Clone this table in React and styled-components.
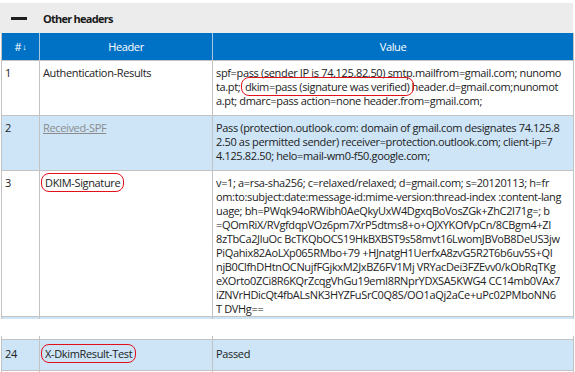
import React from "react";
import styled, { createGlobalStyle } from "styled-components";

const GlobalStyle = createGlobalStyle`
  html, body {
    margin: 0;
    padding: 0;
    background: #ffffff;
  }
  body {
    font-family: "Open Sans", "Noto Sans", "Liberation Sans", sans-serif;
    font-size: 11px;
    letter-spacing: -0.35px;
    color: #222222;
  }
`;

const Page = styled.div`
  width: 575px;
  height: 372px;
  overflow: hidden;
  padding-top: 3px;
  box-sizing: border-box;
`;

const SectionBar = styled.div`
  height: 30px;
  width: 573px;
  background: #ececec;
  display: flex;
  align-items: center;
  gap: 16px;
  padding-left: 11px;
  box-sizing: border-box;
`;

const Dash = styled.span`
  display: block;
  width: 16px;
  height: 3px;
  background: #1e1e1e;
`;

const SectionTitle = styled.span`
  font-weight: 700;
  font-size: 11px;
  letter-spacing: -0.75px;
  color: #1a1a1a;
`;

const Table = styled.div`
  width: 571px;
  margin-left: 1px;
  border-left: 1px solid #c3c3c3;
  border-right: 1px solid #c3c3c3;
`;

const Row = styled.div`
  display: grid;
  grid-template-columns: 38px 173px 1fr;
  height: ${(p) => p.$h}px;
  background: ${(p) => (p.$alt ? "#cde5f7" : "#ffffff")};
  border-bottom: ${(p) => (p.$last ? "none" : "1px solid #c3c3c3")};
  overflow: hidden;
`;

const HeadRow = styled(Row)`
  background: #0072c6;
  border-bottom: 1px solid #c3c3c3;
`;

const HeadCell = styled.div`
  color: #ffffff;
  display: flex;
  align-items: center;
  justify-content: center;
  border-right: 1px solid #a9c6de;
  &:last-child {
    border-right: none;
  }
`;

const Arrow = styled.span`
  font-size: 9px;
  margin-left: 1px;
`;

const Cell = styled.div`
  padding: ${(p) => p.$pt ?? 5}px 0 0 3px;
  border-right: 1px solid #c3c3c3;
  line-height: 14px;
  color: #222222;
  overflow: hidden;
  &:last-child {
    border-right: none;
  }
`;

const Line = styled.div`
  white-space: nowrap;
`;

const Marked = styled.span`
  outline: 1.5px solid #e2101a;
  outline-offset: 1px;
  border-radius: 6px;
  padding: 0 2px;
`;

const VisitedLink = styled.span`
  color: #8c8c8c;
  text-decoration: underline;
`;

const Gap = styled.div`
  height: 17px;
`;

const rows = [
  {
    n: "1",
    name: "Authentication-Results",
    h: 54,
    lines: [
      "spf=pass (sender IP is 74.125.82.50) smtp.mailfrom=gmail.com; nunomo",
      <>
        ta.pt; <Marked>dkim=pass (signature was verified)</Marked>header.d=gmail.com;nunomot
      </>,
      "a.pt; dmarc=pass action=none header.from=gmail.com;",
    ],
  },
  {
    n: "2",
    name: <VisitedLink>Received-SPF</VisitedLink>,
    alt: true,
    h: 54,
    lines: [
      "Pass (protection.outlook.com: domain of gmail.com designates 74.125.8",
      "2.50 as permitted sender) receiver=protection.outlook.com; client-ip=7",
      "4.125.82.50; helo=mail-wm0-f50.google.com;",
    ],
  },
  {
    n: "3",
    name: <Marked>DKIM-Signature</Marked>,
    h: 145,
    lines: [
      "v=1; a=rsa-sha256; c=relaxed/relaxed; d=gmail.com; s=20120113; h=fr",
      "om:to:subject:date:message-id:mime-version:thread-index :content-lang",
      "uage; bh=PWqk94oRWibh0AeQkyUxW4DgxqBoVosZGk+ZhC2I71g=; b",
      "=QOmRiX/RVgfdqpVOz6pm7XrP5dtms8+o+OJXYKOfVpCn/8CBgm4+ZI",
      "8zTbCa2JluOc BcTKQbOCS19HkBXBST9s58mvt16LwomJBVoB8DeUS3jw",
      "PiQahix82AoLXp065RMbo+79 +HJnatgH1UerfxA8zvG5R2T6b6uv5S+QI",
      "njB0ClfhDHtnOCNujfFGjkxM2JxBZ6FV1Mj VRYacDei3FZEvv0/kObRqTKg",
      "eXOrto0ZCi8R6KQrZcqgVhGu19emI8RNprYDXSA5KWG4 CC14mb0VAx7",
      "iZNVrHDicQt4fbALsNK3HYZFuSrC0Q8S/OO1aQj2aCe+uPc02PMboNN6",
      "T DVHg==",
    ],
  },
];

const HeaderRow = ({ n, name, lines, alt, h, pt }) => (
  <Row $h={h} $alt={alt}>
    <Cell $pt={pt}>{n}</Cell>
    <Cell $pt={pt}>{name}</Cell>
    <Cell $pt={pt}>
      {lines.map((l, i) => (
        <Line key={i}>{l}</Line>
      ))}
    </Cell>
  </Row>
);

const EmptyRow = ({ h, alt, last }) => (
  <Row $h={h} $alt={alt} $last={last}>
    <Cell />
    <Cell />
    <Cell />
  </Row>
);

export default function App() {
  return (
    <>
      <GlobalStyle />
      <Page>
        <SectionBar>
          <Dash />
          <SectionTitle>Other headers</SectionTitle>
        </SectionBar>
        <Table>
          <HeadRow $h={27}>
            <HeadCell>
              #<Arrow>↓</Arrow>
            </HeadCell>
            <HeadCell>Header</HeadCell>
            <HeadCell>Value</HeadCell>
          </HeadRow>
          {rows.map((r) => (
            <HeaderRow key={r.n} {...r} />
          ))}
          <EmptyRow h={2} alt last />
        </Table>
        <Gap />
        <Table>
          <EmptyRow h={3} />
          <HeaderRow
            n="24"
            name={<Marked>X-DkimResult-Test</Marked>}
            lines={["Passed"]}
            alt
            h={30}
            pt={7}
          />
          <EmptyRow h={10} last />
        </Table>
      </Page>
    </>
  );
}
